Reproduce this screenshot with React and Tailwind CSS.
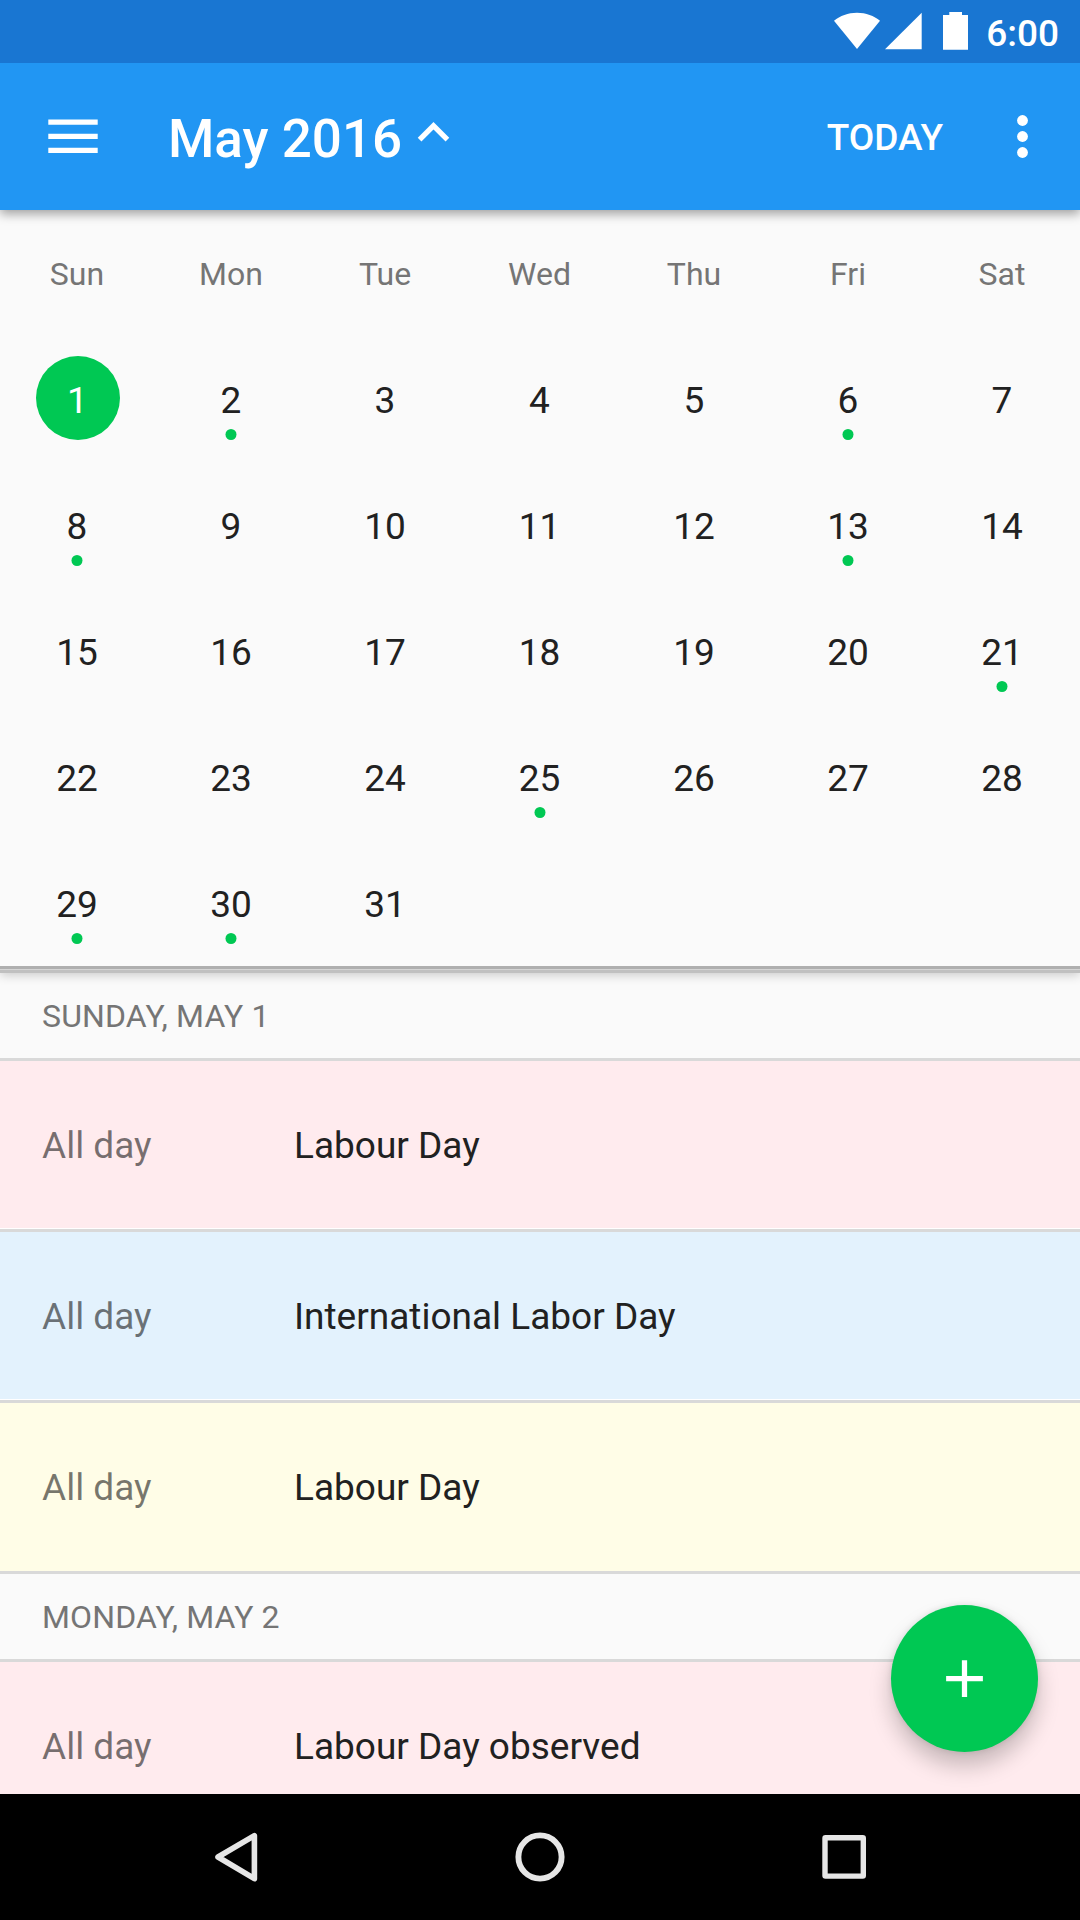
const WEEKDAYS = ['Sun', 'Mon', 'Tue', 'Wed', 'Thu', 'Fri', 'Sat'];
const DAYS = Array.from({ length: 31 }, (_, i) => i + 1);
const MARKED = new Set([2, 6, 8, 13, 21, 25, 29, 30]);
const SELECTED = 1;

function StatusBar() {
  return (
    <div className="relative z-20 flex h-[63px] shrink-0 items-center justify-end bg-[#1976d2] pr-[21px] text-white">
      <svg className="h-[63px] w-[140px]" viewBox="830 0 140 63" fill="currentColor">
        <path d="M857 49 834 20.8C840 16 848 12.8 857 12.8s17 3.2 23 8z" />
        <path d="M885 49.3 921.7 12.8V49.3z" />
        <path d="M943 15h6.3v-3H962v3h6v34.8h-25z" />
      </svg>
      <span className="ml-[16px] pt-[3px] text-[37px] leading-none font-medium">6:00</span>
    </div>
  );
}

function AppBar() {
  return (
    <header className="relative z-10 flex h-[147px] shrink-0 items-center bg-[#2196f3] pr-[26px] pl-[40px] text-white shadow-[0_4px_10px_rgba(0,0,0,0.36)]">
      <svg className="h-[66px] w-[66px]" viewBox="40 103.5 66 66" fill="currentColor">
        <path d="M48.3 119h49.4v5.2H48.3zM48.3 133.2h49.4v5.2H48.3zM48.3 147.3h49.4v5.2H48.3z" />
      </svg>
      <h1 className="ml-[62px] pt-[6px] text-[53px] leading-none font-medium">May 2016</h1>
      <svg className="mb-[9px] h-[63px] w-[63px]" viewBox="0 0 24 24" fill="currentColor">
        <path d="M7.41 15.41 12 10.83l4.59 4.58L18 14l-6-6-6 6z" />
      </svg>
      <span className="ml-auto pt-[2px] text-[37px] leading-none font-medium">TODAY</span>
      <svg className="ml-[48px] h-[63px] w-[63px]" viewBox="990.8 105 63 63" fill="currentColor">
        <circle cx="1022.3" cy="120.5" r="5.4" />
        <circle cx="1022.3" cy="136.5" r="5.4" />
        <circle cx="1022.3" cy="152.5" r="5.4" />
      </svg>
    </header>
  );
}

function Day({ day }) {
  const selected = day === SELECTED;
  return (
    <div className="flex h-[126px] justify-center pt-[20px]">
      <div
        className={
          'relative flex h-[84px] w-[84px] items-center justify-center rounded-full pt-[4px] text-[37px] leading-none ' +
          (selected ? 'ml-px bg-[#00c853] text-white' : 'text-[#212121]')
        }
      >
        {day}
        {MARKED.has(day) && (
          <span className="absolute bottom-0 left-1/2 h-[11px] w-[11px] -translate-x-1/2 rounded-full bg-[#00c853]" />
        )}
      </div>
    </div>
  );
}

function MonthView() {
  return (
    <section className="relative z-[5] shrink-0 bg-[#fafafa] shadow-[0_5px_10px_rgba(0,0,0,0.2)]">
      <div className="grid grid-cols-[154px_154px_154px_155px_154px_154px_154px]">
        {WEEKDAYS.map((name) => (
          <div key={name} className="flex h-[126px] items-center justify-center pt-px text-[32px] leading-none text-[#757575]">
            {name}
          </div>
        ))}
        {DAYS.map((d) => (
          <Day key={d} day={d} />
        ))}
      </div>
      <div className="h-[3px] bg-[#afafaf]" />
      <div className="h-px bg-[#d5d5d5]" />
      <div className="-mb-[3px] h-[3px] bg-[#c0c0c0]" />
    </section>
  );
}

function DateHeader({ children, height }) {
  return (
    <div className={'flex shrink-0 items-center border-b-[3px] border-[#d9d9d9] bg-[#fafafa] pl-[42px] text-[32px] leading-none tracking-[0.15px] text-[#757575] ' + height}>
      {children}
    </div>
  );
}

function Event({ title, color }) {
  return (
    <div className={'flex h-[171px] shrink-0 items-center border-b-[3px] border-[#d9d9d9] text-[37px] leading-none ' + color}>
      <span className="w-[294px] pl-[42px] text-black/54">All day</span>
      <span className="text-[#212121]">{title}</span>
    </div>
  );
}

function NavBar() {
  return (
    <nav className="flex h-[126px] shrink-0 items-center justify-center bg-black">
      <svg className="h-[126px] w-[700px]" viewBox="190 1794 700 126" fill="none" stroke="#e6e6e6" strokeLinejoin="round">
        <path d="M254.4 1835.7v43L218 1857z" strokeWidth="5.6" />
        <circle cx="540" cy="1857" r="21.6" strokeWidth="5.9" />
        <rect x="825" y="1837.8" width="38.3" height="38.3" rx="0.5" strokeWidth="5.4" />
      </svg>
    </nav>
  );
}

export default function App() {
  return (
    <div className="flex h-[1920px] w-[1080px] flex-col overflow-hidden bg-[#fafafa] font-['Roboto',sans-serif]">
      <StatusBar />
      <AppBar />
      <MonthView />
      <main className="relative flex min-h-0 flex-1 flex-col overflow-hidden">
        <DateHeader height="h-[91px] pt-[3px]">SUNDAY, MAY 1</DateHeader>
        <Event title="Labour Day" color="bg-[#ffebee] shadow-[inset_0_-1px_0_#fff]" />
        <Event title="International Labor Day" color="bg-[#e3f2fd] shadow-[inset_0_-1px_0_#fff]" />
        <Event title="Labour Day" color="bg-[#fffde7]" />
        <DateHeader height="h-[88px] pt-px">MONDAY, MAY 2</DateHeader>
        <Event title="Labour Day observed" color="bg-[#ffebee]" />
        <button className="absolute right-[42px] bottom-[42px] flex h-[147px] w-[147px] items-center justify-center rounded-full bg-[#00c853] text-white shadow-[0_14px_22px_rgba(0,0,0,0.22),0_0_6px_rgba(0,0,0,0.1)]">
          <svg className="h-[63px] w-[63px]" viewBox="0 0 24 24" fill="currentColor">
            <path d="M19 13h-6v6h-2v-6H5v-2h6V5h2v6h6v2z" />
          </svg>
        </button>
      </main>
      <NavBar />
    </div>
  );
}
